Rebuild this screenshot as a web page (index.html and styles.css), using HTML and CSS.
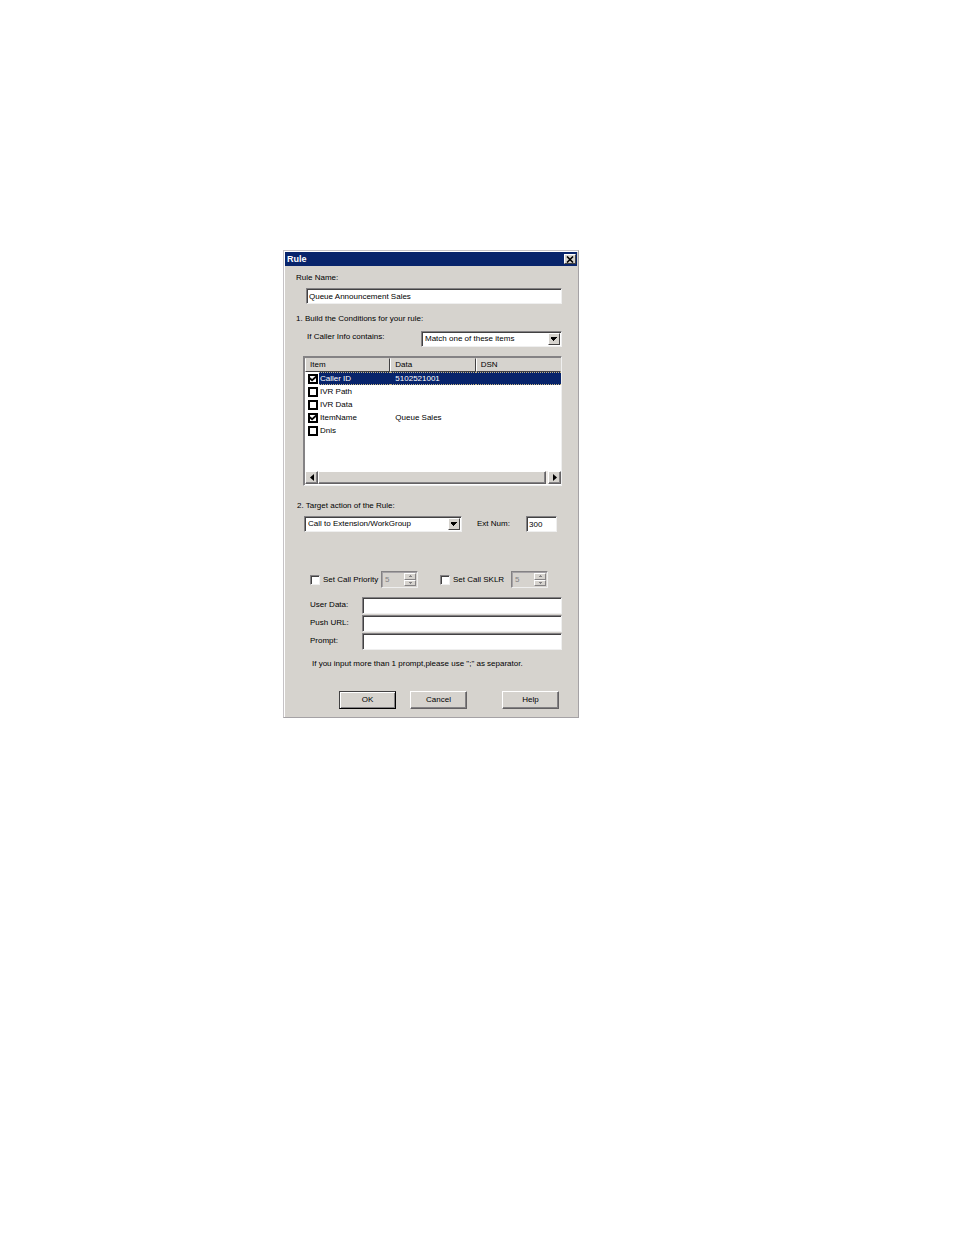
FILE: index.html
```html
<!DOCTYPE html>
<html lang="en">
<head>
    <meta charset="UTF-8">
    <meta name="viewport" content="width=device-width, initial-scale=1.0">
    <title>Rule</title>
    <link rel="stylesheet" href="styles.css">
</head>
<body>
    <main class="dialog">
        <header class="title-bar">
            <h1>Rule</h1>
            <button type="button" class="close-button" aria-label="Close">
                <svg width="8" height="7" viewBox="0 0 8 7"><path d="M1 0.5L7 6.5M7 0.5L1 6.5" stroke="#000" stroke-width="1.6"/></svg>
            </button>
        </header>

        <form class="rule-form">
            <label for="rule-name">Rule Name:</label>
            <input type="text" id="rule-name" class="text-box rule-name" value="Queue Announcement Sales">

            <h2 class="build-title">1. Build the Conditions for your rule:</h2>
            <div class="row match-row">
                <label for="match">If Caller Info contains:</label>
                <span class="select-wrap match-select">
                    <select id="match"><option>Match one of these items</option></select>
                    <svg class="arrow" viewBox="0 0 10 10"><path d="M2 3h6v1h-1v1h-1v1h-1v1h-1v-1h-1v-1h-1z"/></svg>
                </span>
            </div>

            <div class="list">
                <table>
                    <thead>
                        <tr><th>Item</th><th>Data</th><th>DSN</th></tr>
                    </thead>
                    <tbody>
                        <tr class="selected">
                            <td><input type="checkbox" id="caller-id" checked><label for="caller-id">Caller ID</label></td>
                            <td>5102521001</td>
                            <td></td>
                        </tr>
                        <tr>
                            <td><input type="checkbox" id="ivr-path"><label for="ivr-path">IVR Path</label></td>
                            <td></td>
                            <td></td>
                        </tr>
                        <tr>
                            <td><input type="checkbox" id="ivr-data"><label for="ivr-data">IVR Data</label></td>
                            <td></td>
                            <td></td>
                        </tr>
                        <tr>
                            <td><input type="checkbox" id="item-name" checked><label for="item-name">ItemName</label></td>
                            <td>Queue Sales</td>
                            <td></td>
                        </tr>
                        <tr>
                            <td><input type="checkbox" id="dnis"><label for="dnis">Dnis</label></td>
                            <td></td>
                            <td></td>
                        </tr>
                    </tbody>
                </table>
                <div class="scrollbar">
                    <button type="button" aria-label="Scroll left"><svg width="4" height="7" viewBox="0 0 4 7"><path d="M4 0v7L0 3.500z"/></svg></button>
                    <div class="thumb"></div>
                    <button type="button" aria-label="Scroll right"><svg width="4" height="7" viewBox="0 0 4 7"><path d="M0 0v7L4 3.500z"/></svg></button>
                </div>
            </div>

            <h2 class="target-title"><label for="target">2. Target action of the Rule:</label></h2>
            <div class="row target-row">
                <span class="select-wrap target-select">
                    <select id="target"><option>Call to Extension/WorkGroup</option></select>
                    <svg class="arrow" viewBox="0 0 10 10"><path d="M2 3h6v1h-1v1h-1v1h-1v1h-1v-1h-1v-1h-1z"/></svg>
                </span>
                <label for="ext">Ext Num:</label>
                <input type="text" id="ext" class="text-box ext" value="300">
            </div>

            <div class="row options-row">
                <div class="option">
                    <input type="checkbox" id="priority">
                    <label for="priority">Set Call Priority</label>
                    <span class="spinner">
                        <input type="text" value="5" aria-label="Call priority" disabled>
                        <span class="spin-buttons">
                            <button type="button" aria-label="Increase priority" disabled><svg width="3" height="2" viewBox="0 0 3 2"><path d="M0 2v-1h1v-1h1v1h1v1z"/></svg></button>
                            <button type="button" aria-label="Decrease priority" disabled><svg width="3" height="2" viewBox="0 0 3 2"><path d="M0 0v1h1v1h1v-1h1v-1z"/></svg></button>
                        </span>
                    </span>
                </div>
                <div class="option">
                    <input type="checkbox" id="sklr">
                    <label for="sklr">Set Call SKLR</label>
                    <span class="spinner">
                        <input type="text" value="5" aria-label="Call SKLR" disabled>
                        <span class="spin-buttons">
                            <button type="button" aria-label="Increase SKLR" disabled><svg width="3" height="2" viewBox="0 0 3 2"><path d="M0 2v-1h1v-1h1v1h1v1z"/></svg></button>
                            <button type="button" aria-label="Decrease SKLR" disabled><svg width="3" height="2" viewBox="0 0 3 2"><path d="M0 0v1h1v1h1v-1h1v-1z"/></svg></button>
                        </span>
                    </span>
                </div>
            </div>

            <div class="fields">
                <label for="user-data">User Data:</label>
                <input type="text" id="user-data" class="text-box">
                <label for="push-url">Push URL:</label>
                <input type="text" id="push-url" class="text-box">
                <label for="prompt">Prompt:</label>
                <input type="text" id="prompt" class="text-box">
            </div>
            <p class="note">If you input more than 1 prompt,please use ";" as separator.</p>

            <div class="row buttons">
                <button type="button" class="button default">OK</button>
                <button type="button" class="button">Cancel</button>
                <button type="button" class="button help">Help</button>
            </div>
        </form>
    </main>
</body>
</html>
```
FILE: styles.css
```css
:root {
    --face: #d6d3ce;
    --navy: #08246b;
    --shadow: #848284;
    --dark: #424142;
}

* {
    margin: 0;
    padding: 0;
    box-sizing: border-box;
}

body {
    padding: 250px 0 40px 283px;
    background-color: #fff;
    color: #000;
    font-family: "Liberation Sans", Arial, sans-serif;
    font-size: 8px;
    line-height: 12px;
}

input, select, button {
    font: inherit;
    color: inherit;
    border-radius: 0;
    outline: none;
}

h2 {
    font-size: 8px;
    font-weight: normal;
}

label {
    display: block;
    white-space: nowrap;
}

svg {
    display: block;
}

.dialog {
    width: 296px;
    max-width: 100%;
    padding: 1px;
    border: 1px solid;
    border-color: #c6c3c6 #a5a2a5 #a5a2a5 #c6c3c6;
    background-color: var(--face);
    box-shadow: inset 1px 1px #fff;
}

.title-bar {
    display: flex;
    align-items: center;
    justify-content: space-between;
    height: 14px;
    padding: 0 1px 0 2px;
    background-color: var(--navy);
    color: #fff;
}

.title-bar h1 {
    font-size: 9px;
    font-weight: bold;
}

.close-button {
    display: flex;
    align-items: center;
    justify-content: center;
    width: 12px;
    height: 10px;
    border: 1px solid;
    border-color: #fff var(--dark) var(--dark) #fff;
    background-color: var(--face);
}

.rule-form {
    padding: 6px 15px 7px 11px;
}

.row {
    display: flex;
    align-items: center;
}

/* sunken controls */
.text-box, .select-wrap, .list, .spinner {
    border: 1px solid;
    border-color: var(--shadow) #efefef #efefef var(--shadow);
    background-color: #fff;
    box-shadow: inset 1px 1px var(--dark);
}

.text-box {
    width: 100%;
    height: 16px;
    padding: 0 2px;
}

.rule-name {
    display: block;
    width: auto;
    min-width: calc(100% - 10px);
    margin: 4px 0 0 10px;
}

.build-title {
    margin-top: 9px;
}

.match-row {
    justify-content: space-between;
    height: 16px;
    margin-top: 6px;
    padding-left: 11px;
}

.match-row label {
    height: 16px;
}

.select-wrap {
    position: relative;
    height: 16px;
}

.select-wrap select {
    display: block;
    width: 100%;
    height: 14px;
    padding: 0 14px 0 3px;
    border: none;
    background: none;
    appearance: none;
}

.match-select {
    width: 141px;
}

.target-select {
    width: 158px;
}

.arrow {
    position: absolute;
    top: 1px;
    right: 1px;
    width: 12px;
    height: 12px;
    border: 1px solid;
    border-color: #fff var(--dark) var(--dark) #fff;
    background-color: var(--face);
    pointer-events: none;
}

.list {
    display: flex;
    flex-direction: column;
    height: 130px;
    margin: 9px 0 0 7px;
    padding: 1px 0 1px 1px;
    box-shadow: inset 1px 1px var(--shadow);
}

table {
    width: 100%;
    table-layout: fixed;
    border-collapse: separate;
    border-spacing: 0;
}

th {
    height: 14px;
    padding: 0 5px 0 4px;
    border: 1px solid;
    border-color: var(--face) var(--dark) var(--dark) #fff;
    background-color: var(--face);
    font-weight: normal;
    line-height: 12px;
    text-align: left;
}

th:last-child {
    border-right-color: var(--face);
}

td {
    height: 13px;
    padding: 0 5px;
    line-height: 13px;
    white-space: nowrap;
}

td:first-child {
    display: flex;
    align-items: center;
    padding: 0 0 0 3px;
}

td label {
    flex: 1;
    height: 13px;
    margin-left: 1px;
    padding-left: 1px;
}

.selected td + td, .selected label {
    border: dotted #c6b684;
    border-width: 1px 0;
    background-color: var(--navy);
    color: #fff;
    line-height: 11px;
}

input[type="checkbox"] {
    flex: none;
    width: 10px;
    height: 10px;
    border: 1px solid;
    border-color: var(--shadow) #efefef #efefef var(--shadow);
    background-color: #fff;
    box-shadow: inset 1px 1px var(--dark);
    appearance: none;
}

td input[type="checkbox"] {
    border: 2px solid #000;
    box-shadow: none;
}

td input[type="checkbox"]:checked::before {
    content: "";
    display: block;
    width: 6px;
    height: 6px;
    background-color: #000;
    clip-path: polygon(0 30%, 35% 60%, 100% 0, 100% 40%, 35% 100%, 0 70%);
}

.scrollbar {
    display: flex;
    height: 13px;
    margin-top: auto;
    background-color: #efebe7;
}

.scrollbar button {
    display: flex;
    align-items: center;
    justify-content: center;
    width: 13px;
}

.scrollbar button, .thumb, .button {
    border: 1px solid;
    border-color: #fff #636163 #636163 #fff;
    background-color: var(--face);
    box-shadow: inset -1px -1px var(--shadow);
}

.thumb {
    flex: 1;
    margin-right: 2px;
}

.target-title {
    margin-top: 14px;
    padding-left: 1px;
}

.target-row {
    margin: 4px 5px 0 8px;
}

.target-row label {
    margin-left: 15px;
}

.ext {
    width: 31px;
    margin-left: auto;
}

.options-row {
    justify-content: space-between;
    margin: 39px 14px 0 14px;
}

.option {
    display: flex;
    align-items: center;
}

.option label {
    width: 58px;
    margin-left: 3px;
}

.spinner {
    display: flex;
    width: 37px;
    height: 17px;
    padding: 1px;
    background-color: var(--face);
    box-shadow: inset 1px 1px #a5a2a5;
}

.spinner input {
    flex: 1;
    min-width: 0;
    padding-left: 2px;
    border: none;
    background: none;
    color: var(--shadow);
}

.spin-buttons {
    display: flex;
    flex-direction: column;
    width: 12px;
}

.spin-buttons button {
    display: flex;
    flex: 1;
    align-items: center;
    justify-content: center;
    border: 1px solid;
    border-color: #fff var(--shadow) var(--shadow) #fff;
    background-color: var(--face);
}

.spin-buttons svg {
    fill: var(--shadow);
}

.fields {
    display: grid;
    grid-template-columns: 52px 1fr;
    row-gap: 1px;
    align-items: center;
    margin: 9px 0 0 14px;
}

.fields label {
    height: 14px;
}

.fields .text-box {
    height: 17px;
}

.note {
    margin: 8px 0 0 16px;
    white-space: nowrap;
}

.buttons {
    gap: 14px;
    margin: 21px 3px 0 43px;
}

.button {
    width: 57px;
    height: 18px;
}

.default {
    border-color: var(--dark) #000 #000 var(--dark);
    box-shadow: inset 1px 1px #fff, inset -1px -1px var(--shadow);
}

.help {
    margin-left: auto;
}
```
